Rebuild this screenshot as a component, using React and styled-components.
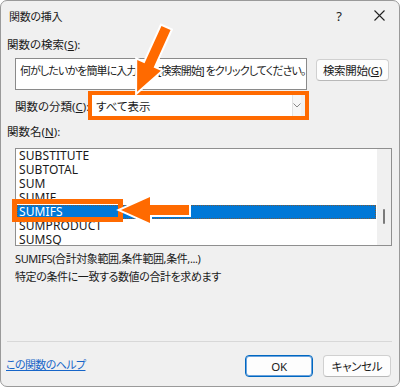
import React from 'react';
import styled, { createGlobalStyle } from 'styled-components';

const Global = createGlobalStyle`
  html, body { margin: 0; padding: 0; background: #ffffff; }
  * { box-sizing: border-box; }
`;

const ORANGE = '#ff6a00';

const Window = styled.div`
  position: relative;
  width: 400px;
  height: 387px;
  border: 1px solid #9a9a9a;
  border-radius: 7px;
  background: #f0f0f0;
  overflow: hidden;
  display: flex;
  flex-direction: column;
  font-family: "Noto Sans", "Noto Sans CJK JP", sans-serif;
  font-feature-settings: "palt";
  font-size: 11.5px;
  color: #1a1a1a;
`;

const TitleBar = styled.div`
  height: 29px;
  display: flex;
  align-items: center;
  padding-left: 8px;
`;

const Title = styled.div`
  flex: 1;
  font-size: 11px;
  letter-spacing: -0.3px;
`;

const TitleButton = styled.div`
  width: 40px;
  height: 29px;
  display: flex;
  align-items: center;
  justify-content: center;
  font-size: 13px;
  color: #222;
`;

const Body = styled.div`
  flex: 1;
  display: flex;
  flex-direction: column;
  padding: 0 8px 0 6px;
`;

const Label = styled.div`
  height: 14px;
  line-height: 14px;
  margin-top: ${p => p.$top || 0}px;
  padding-left: ${p => p.$indent || 0}px;
  white-space: nowrap;
`;

const SearchRow = styled.div`
  display: flex;
  align-items: flex-start;
  margin-top: 6px;
  padding-left: 8px;
`;

const SearchBox = styled.div`
  width: 292px;
  height: 32px;
  background: #fff;
  border: 1px solid #8a8a8a;
  padding: 5px 4px;
  line-height: 14px;
  white-space: nowrap;
  overflow: hidden;
  color: #222;
  font-size: 11px;
  letter-spacing: -0.9px;
`;

const Button = styled.div`
  width: ${p => p.$w}px;
  height: 22px;
  display: flex;
  align-items: center;
  justify-content: center;
  background: #fdfdfd;
  border: 1px solid ${p => (p.$primary ? '#0067c0' : '#d0d0d0')};
  border-bottom-color: ${p => (p.$primary ? '#0067c0' : '#b8b8b8')};
  box-shadow: ${p => (p.$primary ? 'inset 0 0 0 1px #6aa3de' : 'none')};
  border-radius: 4px;
  white-space: nowrap;
  letter-spacing: -0.3px;
`;

const SearchButton = styled(Button)`
  margin-left: auto;
  margin-right: 2px;
  margin-top: 1px;
`;

const CategoryRow = styled.div`
  display: flex;
  align-items: center;
  margin-top: 5px;
  padding-left: 8px;
  height: 21px;
`;

const CategoryLabel = styled.div`
  width: 77px;
  white-space: nowrap;
`;

const Select = styled.div`
  width: 209px;
  height: 21px;
  background: #fff;
  display: flex;
  align-items: center;
`;

const SelectText = styled.div`
  flex: 1;
  padding-left: 4px;
`;

const SelectArrow = styled.div`
  width: 9px;
  height: 100%;
  border-left: 1px solid #e2e2e2;
  background: #f6f6f6;
  display: flex;
  align-items: center;
  justify-content: center;
`;

const List = styled.div`
  margin-top: 9px;
  margin-left: 8px;
  width: 377px;
  height: 98px;
  border: 1px solid #8f8f8f;
  background: #fff;
  display: flex;
  overflow: hidden;
`;

const Items = styled.div`
  flex: 1;
  padding: 0 1px;
`;

const Item = styled.div`
  height: 14px;
  line-height: 14px;
  padding-left: 2px;
  font-size: 12px;
  letter-spacing: 0.1px;
  color: ${p => (p.$selected ? '#fff' : '#1a1a1a')};
  background: ${p => (p.$selected ? '#0078d7' : 'transparent')};
  outline: ${p => (p.$selected ? '1px dotted #7a5a3a' : 'none')};
  outline-offset: -1px;
`;

const ScrollTrack = styled.div`
  width: 14px;
  background: #f0f0f0;
  position: relative;
`;

const ScrollThumb = styled.div`
  position: absolute;
  left: 6px;
  top: 60px;
  width: 2px;
  height: 15px;
  background: #7a7a7a;
  border-radius: 1px;
`;

const Description = styled.div`
  margin-top: 4px;
  padding-left: 8px;
  line-height: 18px;
  font-size: 11px;
  letter-spacing: -0.4px;
`;

const Separator = styled.div`
  margin-top: 55px;
  height: 1px;
  background: #d8d8d8;
  margin-right: -1px;
`;

const Footer = styled.div`
  margin-top: 13px;
  display: flex;
  align-items: center;
  gap: 10px;
`;

const HelpLink = styled.a`
  flex: 1;
  color: #1665c8;
  text-decoration: underline;
  font-size: 11px;
  letter-spacing: -0.6px;
  margin-left: -1px;
  margin-top: -5px;
`;

const Overlay = styled.svg`
  position: absolute;
  left: -1px;
  top: -1px;
  pointer-events: none;
`;

const items = ['SUBSTITUTE', 'SUBTOTAL', 'SUM', 'SUMIF', 'SUMIFS', 'SUMPRODUCT', 'SUMSQ'];

function Arrow({ x, y, angle, length }) {
  const L = length;
  const pts = `0,-5 ${L - 29},-5 ${L - 29},-13 ${L},0 ${L - 29},13 ${L - 29},5 0,5`;
  return (
    <polygon
      points={pts}
      transform={`translate(${x} ${y}) rotate(${angle})`}
      fill={ORANGE}
      stroke="#fff"
      strokeWidth="4"
      strokeLinejoin="miter"
      paintOrder="stroke"
    />
  );
}

export default function App() {
  return (
    <>
      <Global />
      <Window>
        <TitleBar>
          <Title>関数の挿入</Title>
          <TitleButton>?</TitleButton>
          <TitleButton>
            <svg width="11" height="11" viewBox="0 0 11 11">
              <path d="M0.5 0.5 L10.5 10.5 M10.5 0.5 L0.5 10.5" stroke="#222" strokeWidth="1.1" />
            </svg>
          </TitleButton>
        </TitleBar>
        <Body>
          <Label $top={8}>関数の検索(<u>S</u>):</Label>
          <SearchRow>
            <SearchBox>何がしたいかを簡単に入力して、[検索開始] をクリックしてください。</SearchBox>
            <SearchButton $w={73}>検索開始(<u>G</u>)</SearchButton>
          </SearchRow>
          <CategoryRow>
            <CategoryLabel>関数の分類(<u>C</u>):</CategoryLabel>
            <Select>
              <SelectText>すべて表示</SelectText>
              <SelectArrow>
                <svg width="8" height="5" viewBox="0 0 8 5">
                  <path d="M0.5 0.5 L4 4 L7.5 0.5" fill="none" stroke="#888" strokeWidth="1" />
                </svg>
              </SelectArrow>
            </Select>
          </CategoryRow>
          <Label $top={9}>関数名(<u>N</u>):</Label>
          <List>
            <Items>
              {items.map(name => (
                <Item key={name} $selected={name === 'SUMIFS'}>{name}</Item>
              ))}
            </Items>
            <ScrollTrack>
              <ScrollThumb />
            </ScrollTrack>
          </List>
          <Description>
            SUMIFS(合計対象範囲,条件範囲,条件,...)
            <br />
            特定の条件に一致する数値の合計を求めます
          </Description>
          <Separator />
          <Footer>
            <HelpLink href="#">この関数のヘルプ</HelpLink>
            <Button $w={68} $primary>OK</Button>
            <Button $w={68}>キャンセル</Button>
          </Footer>
        </Body>
        <Overlay width="400" height="387" viewBox="0 0 400 387">
          <rect x="90" y="93" width="217" height="25" fill="none" stroke={ORANGE} strokeWidth="4" />
          <rect x="14.5" y="201.5" width="106" height="18" fill="none" stroke={ORANGE} strokeWidth="5" />
          <Arrow x={189} y={210} angle={180} length={68} />
          <Arrow x={166} y={28} angle={114.4} length={70} />
        </Overlay>
      </Window>
    </>
  );
}
